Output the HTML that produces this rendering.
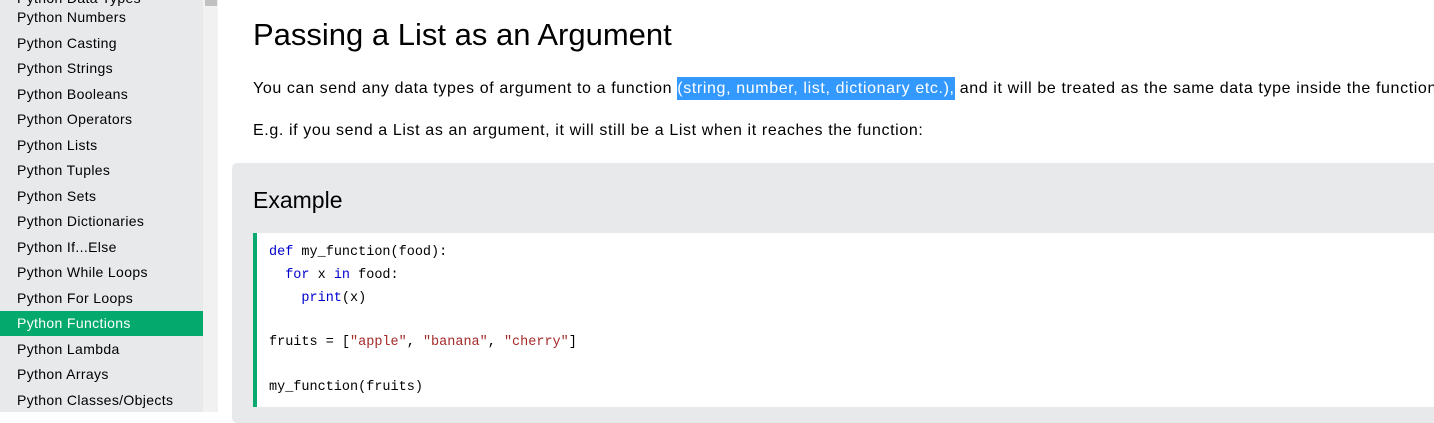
<!DOCTYPE html>
<html><head><style>
body{margin:0;width:1434px;height:412px;overflow:hidden;background:#fff;font-family:"Liberation Sans",sans-serif;position:relative}
#side{position:absolute;left:0;top:0;width:203px;height:412px;background:#e7e9eb;overflow:hidden}
#track{position:absolute;left:203px;top:0;width:15px;height:412px;background:#f1f1f1}
#thumb{position:absolute;left:205px;top:0;width:12px;height:6px;background:#c1c1c1}
.it{position:absolute;left:0;width:203px;height:25px;line-height:25px;padding-left:17px;box-sizing:border-box;font-size:14px;letter-spacing:0.35px;color:#000}
.act{background:#04AA6D;color:#fff}
h1{position:absolute;left:253px;top:17px;margin:0;font-weight:normal;font-size:31px;color:#000}
.p{position:absolute;left:253px;font-size:16px;letter-spacing:0.62px;color:#000;white-space:nowrap}
.hl{background:#3399ff;color:#fff;padding:3px 0}
#ex{position:absolute;left:232px;top:163px;width:1220px;height:260px;background:#e7e9eb;border-radius:5px}
#ex h2{position:absolute;left:21px;top:24px;margin:0;font-weight:normal;font-size:23px}
#code{position:absolute;left:253px;top:233px;width:1200px;height:174px;background:#fff;border-left:4px solid #04AA6D;box-sizing:border-box}
.c{position:absolute;left:12px;font-family:"Liberation Mono",monospace;font-size:13.5px;white-space:pre;color:#000}
.k{color:mediumblue}.s{color:brown}
</style></head><body>
<div id="side">
<div class="it" style="top:-14px">Python Data Types</div>
<div class="it" style="top:5px">Python Numbers</div>
<div class="it" style="top:31px">Python Casting</div>
<div class="it" style="top:56px">Python Strings</div>
<div class="it" style="top:82px">Python Booleans</div>
<div class="it" style="top:107px">Python Operators</div>
<div class="it" style="top:133px">Python Lists</div>
<div class="it" style="top:158px">Python Tuples</div>
<div class="it" style="top:184px">Python Sets</div>
<div class="it" style="top:209px">Python Dictionaries</div>
<div class="it" style="top:235px">Python If...Else</div>
<div class="it" style="top:260px">Python While Loops</div>
<div class="it" style="top:286px">Python For Loops</div>
<div class="it act" style="top:311px">Python Functions</div>
<div class="it" style="top:337px">Python Lambda</div>
<div class="it" style="top:362px">Python Arrays</div>
<div class="it" style="top:388px">Python Classes/Objects</div>
</div>
<div id="track"></div><div id="thumb"></div>
<h1>Passing a List as an Argument</h1>
<div class="p" style="top:80px">You can send any data types of argument to a function <span class="hl">(string, number, list, dictionary etc.),</span> and it will be treated as the same data type inside the function.</div>
<div class="p" style="top:122px">E.g. if you send a List as an argument, it will still be a List when it reaches the function:</div>
<div id="ex"><h2>Example</h2></div>
<div id="code">
<div class="c" style="top:12px"><span class="k">def</span> my_function(food):</div>
<div class="c" style="top:35px">  <span class="k">for</span> x <span class="k">in</span> food:</div>
<div class="c" style="top:58px">    <span class="k">print</span>(x)</div>
<div class="c" style="top:102px">fruits = [<span class="s">"apple"</span>, <span class="s">"banana"</span>, <span class="s">"cherry"</span>]</div>
<div class="c" style="top:147px">my_function(fruits)</div>
</div>
</body></html>
